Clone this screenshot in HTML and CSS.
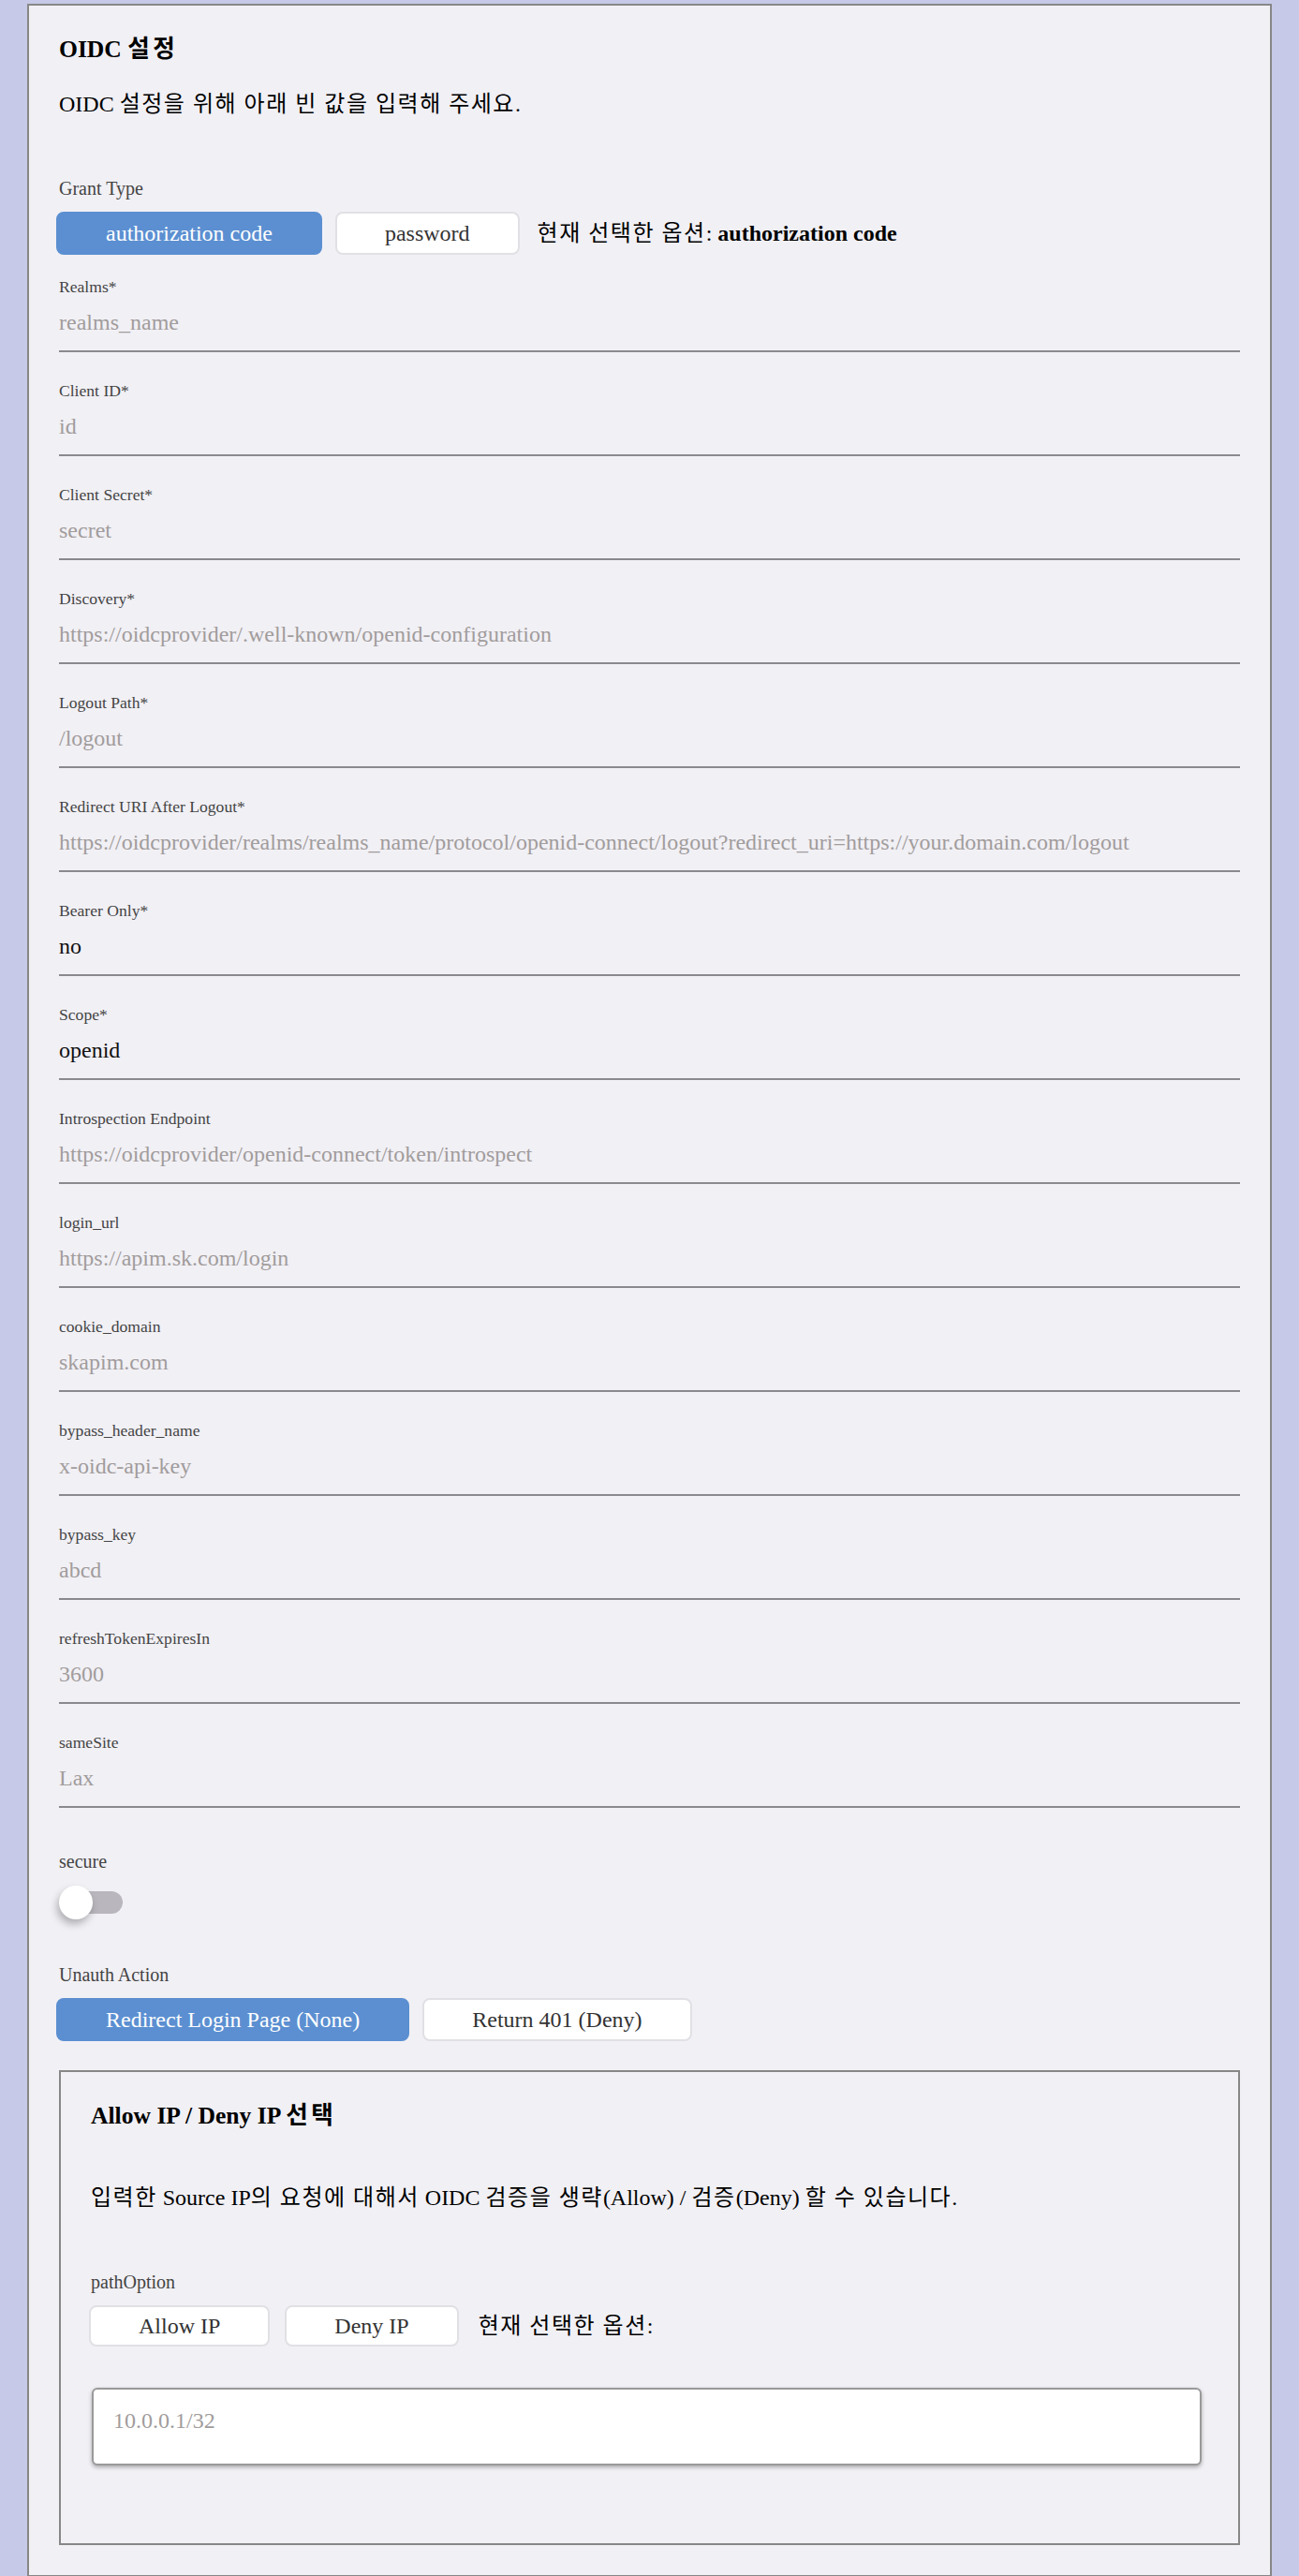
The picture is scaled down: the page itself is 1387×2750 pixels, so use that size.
FILE: index.html
```html
<!DOCTYPE html>
<html lang="ko">
<head>
<meta charset="utf-8">
<title>OIDC 설정</title>
<link rel="stylesheet" href="styles.css">
</head>
<body>
<div class="page">
  <section class="card">
    <h2 class="title">OIDC <span class="ko">설정</span></h2>
    <p class="desc">OIDC <span class="ko">설정을 위해 아래 빈 값을 입력해 주세요</span>.</p>

    <div class="group-label">Grant Type</div>
    <div class="seg-row">
      <button type="button" class="seg seg--on">authorization code</button>
      <button type="button" class="seg">password</button>
      <span class="current"><span class="ko">현재 선택한 옵션</span>: <strong>authorization code</strong></span>
    </div>

    <div class="fields">
      <div class="field"><label>Realms*</label><input type="text" placeholder="realms_name"></div>
      <div class="field"><label>Client ID*</label><input type="text" placeholder="id"></div>
      <div class="field"><label>Client Secret*</label><input type="text" placeholder="secret"></div>
      <div class="field"><label>Discovery*</label><input type="text" placeholder="https://oidcprovider/.well-known/openid-configuration"></div>
      <div class="field"><label>Logout Path*</label><input type="text" placeholder="/logout"></div>
      <div class="field"><label>Redirect URI After Logout*</label><input type="text" placeholder="https://oidcprovider/realms/realms_name/protocol/openid-connect/logout?redirect_uri=https://your.domain.com/logout"></div>
      <div class="field"><label>Bearer Only*</label><input type="text" value="no"></div>
      <div class="field"><label>Scope*</label><input type="text" value="openid"></div>
      <div class="field"><label>Introspection Endpoint</label><input type="text" placeholder="https://oidcprovider/openid-connect/token/introspect"></div>
      <div class="field"><label>login_url</label><input type="text" placeholder="https://apim.sk.com/login"></div>
      <div class="field"><label>cookie_domain</label><input type="text" placeholder="skapim.com"></div>
      <div class="field"><label>bypass_header_name</label><input type="text" placeholder="x-oidc-api-key"></div>
      <div class="field"><label>bypass_key</label><input type="text" placeholder="abcd"></div>
      <div class="field"><label>refreshTokenExpiresIn</label><input type="text" placeholder="3600"></div>
      <div class="field"><label>sameSite</label><input type="text" placeholder="Lax"></div>
    </div>

    <div class="group-label group-label--secure">secure</div>
    <div class="switch" role="switch" aria-checked="false">
      <span class="switch-track"></span>
      <span class="switch-knob"></span>
    </div>

    <div class="group-label group-label--unauth">Unauth Action</div>
    <div class="seg-row">
      <button type="button" class="seg seg--on">Redirect Login Page (None)</button>
      <button type="button" class="seg">Return 401 (Deny)</button>
    </div>

    <div class="ipbox">
      <h2 class="title">Allow IP / Deny IP <span class="ko">선택</span></h2>
      <p class="desc desc--box"><span class="ko">입력한</span> Source IP<span class="ko">의 요청에 대해서</span> OIDC <span class="ko">검증을 생략</span>(Allow) / <span class="ko">검증</span>(Deny) <span class="ko">할 수 있습니다</span>.</p>
      <div class="group-label">pathOption</div>
      <div class="seg-row seg-row--box">
        <button type="button" class="seg seg--sm">Allow IP</button>
        <button type="button" class="seg seg--sm">Deny IP</button>
        <span class="current"><span class="ko">현재 선택한 옵션</span>:</span>
      </div>
      <textarea class="ip-input" placeholder="10.0.0.1/32"></textarea>
    </div>
  </section>
</div>
</body>
</html>
```

FILE: styles.css
```css
* {
  box-sizing: border-box;
}

html,
body {
  margin: 0;
  padding: 0;
}

body {
  background: #c6c9e7;
  font-family: "Liberation Serif", "Noto Sans CJK KR", serif;
  color: #000;
}

.page {
  padding: 4px 29px 0;
}

.card {
  background: #f1f0f5;
  border: 2px solid #878787;
  padding: 32px;
}

.ko {
  letter-spacing: 1.5px;
}

.title {
  margin: 0;
  font-size: 25.6px;
  line-height: 30px;
  font-weight: 700;
  color: #000;
}

.title .ko {
  letter-spacing: 3.5px;
}

.desc {
  margin: 29px 0 0;
  font-size: 24px;
  line-height: 28px;
  font-weight: 400;
}

.desc--box {
  margin-top: 58px;
}

.group-label {
  margin-top: 64px;
  font-size: 20px;
  line-height: 24px;
  color: #444;
}

.group-label--secure {
  margin-top: 45px;
}

.group-label--unauth {
  margin-top: 47px;
}

.seg-row {
  display: flex;
  align-items: center;
  gap: 14px;
  margin: 13px 0 0 -3px;
}

.seg-row--box {
  margin-left: -2px;
  gap: 16px;
}

.seg {
  height: 46px;
  padding: 0 51px;
  border: 2px solid #e1e0e4;
  border-radius: 8px;
  background: #fff;
  color: #333;
  font-family: "Liberation Serif", "Noto Sans CJK KR", serif;
  font-size: 24px;
  line-height: 28px;
  cursor: pointer;
}

.seg--on {
  background: #5b8fd1;
  border-color: #5b8fd1;
  color: #fff;
}

.seg--sm {
  height: 44px;
}

.current {
  margin-left: 5px;
  font-size: 24px;
  line-height: 28px;
  color: #000;
}

.current strong {
  font-weight: 700;
}

.fields {
  display: flex;
  flex-direction: column;
  gap: 31px;
  margin-top: 24px;
}

.field label {
  display: block;
  font-size: 17.6px;
  line-height: 20px;
  color: #444;
}

.field input {
  display: block;
  width: 100%;
  height: 60px;
  margin: 0;
  padding: 14px 0 16px;
  border: 0;
  border-bottom: 2px solid #8a898d;
  border-radius: 0;
  background: transparent;
  font-family: "Liberation Serif", "Noto Sans CJK KR", serif;
  font-size: 24px;
  line-height: 28px;
  color: #111;
  outline: none;
}

.field input::placeholder {
  color: #a19c9c;
  opacity: 1;
}

.switch {
  position: relative;
  width: 68px;
  height: 36px;
  margin-top: 14px;
}

.switch-track {
  position: absolute;
  left: 4px;
  top: 6px;
  width: 64px;
  height: 24px;
  border-radius: 12px;
  background: #b9b7bd;
}

.switch-knob {
  position: absolute;
  left: 0;
  top: 0;
  width: 36px;
  height: 36px;
  border-radius: 50%;
  background: #fff;
  box-shadow: -2px 5px 9px rgba(0, 0, 0, 0.28);
}

.ipbox {
  margin-top: 31px;
  border: 2px solid #878787;
  padding: 32px;
}

.ip-input {
  display: block;
  width: calc(100% - 8px);
  height: 83px;
  margin: 44px 0 51px 1px;
  padding: 19px 21px;
  border: 2px solid #9a9a9a;
  border-radius: 6px;
  background: #fff;
  box-shadow: 0 2px 4px rgba(0, 0, 0, 0.3);
  font-family: "Liberation Serif", "Noto Sans CJK KR", serif;
  font-size: 24px;
  line-height: 28px;
  color: #111;
  resize: none;
  outline: none;
}

.ip-input::placeholder {
  color: #a19c9c;
  opacity: 1;
}
```
